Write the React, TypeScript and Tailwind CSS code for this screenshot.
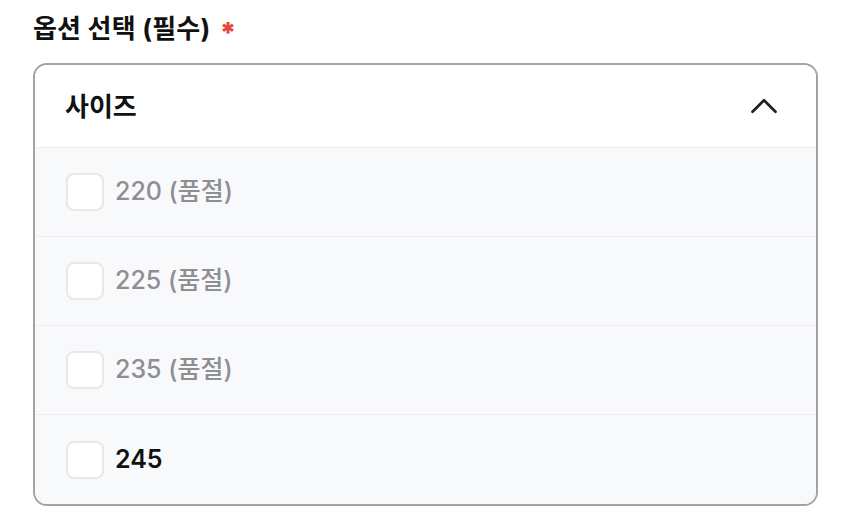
import { ChevronUp } from "lucide-react";

const sizes = [
  { label: "220 (품절)", soldOut: true },
  { label: "225 (품절)", soldOut: true },
  { label: "235 (품절)", soldOut: true },
  { label: "245", soldOut: false },
];

export default function App() {
  return (
    <div
      className="w-[850px] h-[525px] bg-white px-[33px] pt-[11px]"
      style={{ fontFamily: 'Inter, "Noto Sans CJK KR", sans-serif' }}
    >
      <div className="flex items-center gap-[9px] h-[34px]">
        <h2 className="text-[26px] font-bold text-[#111] tracking-[0.2px]">옵션 선택 (필수)</h2>
        <span className="text-[28px] font-black text-[#e5483b] leading-none mt-[10px]">*</span>
      </div>

      <div className="mt-[18px] w-[785px] rounded-[14px] border-2 border-[#a3a3a3] overflow-hidden">
        <div className="h-[83px] flex items-center justify-between pl-[30px] pr-[29px] bg-white border-b border-[#ececec]">
          <span className="text-[26px] font-bold text-[#111]">사이즈</span>
          <ChevronUp className="w-[46px] h-[46px] text-[#222]" strokeWidth={1.4} />
        </div>
        {sizes.map((s, i) => (
          <div
            key={s.label}
            className={`h-[89px] flex items-center pl-[31px] bg-[#f8f9fb] ${
              i < sizes.length - 1 ? "border-b border-[#ececf0]" : ""
            }`}
          >
            <div className="w-[38px] h-[38px] rounded-[8px] border-2 border-[#e8e8ea] bg-white" />
            <span
              className={`ml-[11px] text-[25px] ${
                s.soldOut ? "text-[#8e8e93] font-medium" : "text-[#111] font-semibold"
              }`}
            >
              {s.label}
            </span>
          </div>
        ))}
      </div>
    </div>
  );
}
